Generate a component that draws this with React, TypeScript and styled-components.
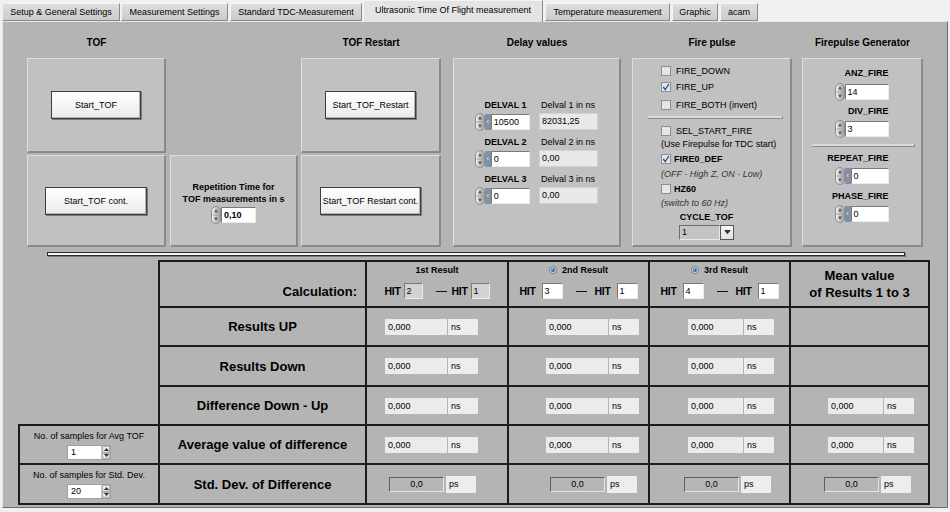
import React from 'react';
import styled, { createGlobalStyle } from 'styled-components';

const GlobalStyle = createGlobalStyle`
  html, body { margin: 0; padding: 0; background: #f0f0f0; }
  body { font-family: "Liberation Sans", Arial, sans-serif; font-size: 9px; color: #000; }
  * { box-sizing: border-box; }
`;

const Page = styled.div`
  width: 950px;
  height: 512px;
  overflow: hidden;
  background: #f0f0f0;
`;

const TabBar = styled.div`
  display: flex;
  align-items: flex-end;
  height: 21px;
  padding-left: 2px;
  position: relative;
  z-index: 1;
`;

const Tab = styled.div<{ $w: number; $active?: boolean; $ml?: number }>`
  width: ${(p) => p.$w}px;
  margin-left: ${(p) => p.$ml ?? 0}px;
  height: ${(p) => (p.$active ? 22 : 18)}px;
  margin-bottom: ${(p) => (p.$active ? -1 : 0)}px;
  display: flex;
  align-items: center;
  justify-content: center;
  padding-bottom: ${(p) => (p.$active ? 4 : 0)}px;
  background: ${(p) => (p.$active ? '#e4e4e4' : 'linear-gradient(#dedede, #cbcbcb)')};
  border: 1px solid #8a8a8a;
  border-top-color: #f4f4f4;
  border-left-color: #f4f4f4;
  border-bottom: ${(p) => (p.$active ? 'none' : '1px solid #8a8a8a')};
  font-size: 9px;
  white-space: nowrap;
`;

const Panel = styled.div`
  margin-left: 2px;
  width: 946px;
  height: 487px;
  background: #b4b4b4;
  border: 1px solid;
  border-color: #e6e6e6 #6c6c6c #6c6c6c #e6e6e6;
  padding-top: 10px;
  display: flex;
  flex-direction: column;
`;

const TopRow = styled.div`
  display: flex;
  margin-left: 24px;
`;

const Column = styled.div<{ $w: number; $ml?: number }>`
  width: ${(p) => p.$w}px;
  margin-left: ${(p) => p.$ml ?? 0}px;
  display: flex;
  flex-direction: column;
`;

const Heading = styled.div`
  height: 20px;
  margin-bottom: 6px;
  display: flex;
  align-items: center;
  justify-content: center;
  font-weight: bold;
  font-size: 10px;
  white-space: nowrap;
`;

const Spacer = styled.div<{ $h: number }>`
  height: ${(p) => p.$h}px;
`;

const Cell = styled.div<{ $h: number; $mt?: number; $justify?: string; $align?: string; $pt?: number; $pl?: number }>`
  height: ${(p) => p.$h}px;
  margin-top: ${(p) => p.$mt ?? 0}px;
  background: #c1c1c1;
  border-style: solid;
  border-width: 1px 2px 2px 1px;
  border-color: #dedede #8a8a8a #8a8a8a #dedede;
  display: flex;
  flex-direction: column;
  justify-content: ${(p) => p.$justify ?? 'center'};
  align-items: ${(p) => p.$align ?? 'center'};
  padding-top: ${(p) => p.$pt ?? 0}px;
  padding-left: ${(p) => p.$pl ?? 0}px;
`;

const PushButton = styled.button<{ $w: number }>`
  width: ${(p) => p.$w}px;
  height: 28px;
  padding: 0;
  background: linear-gradient(#ffffff, #ebebeb);
  border: 1px solid #3e3e3e;
  box-shadow: inset -1px -1px 0 #b4b4b4, 1px 1px 0 #7a7a7a;
  font-family: "Liberation Sans", Arial, sans-serif;
  font-size: 9px;
  color: #000;
  white-space: nowrap;
`;

const BoldLine = styled.div<{ $mt?: number }>`
  font-weight: bold;
  font-size: 9px;
  line-height: 12px;
  white-space: nowrap;
  margin-top: ${(p) => p.$mt ?? 0}px;
`;

const Control = styled.div<{ $mt?: number }>`
  display: flex;
  align-items: center;
  height: 18px;
  margin-top: ${(p) => p.$mt ?? 0}px;
`;

const SpinSvg = styled.svg`
  display: block;
  flex: none;
`;

const IndexStrip = styled.div`
  width: 6px;
  height: 16px;
  background: #8290a6;
  color: #dfe6f0;
  font-size: 8px;
  line-height: 16px;
  text-align: center;
`;

const InputBox = styled.div<{ $w: number; $bold?: boolean }>`
  width: ${(p) => p.$w}px;
  height: 16px;
  background: #fff;
  border: 1px solid;
  border-color: #7a7a7a #ececec #ececec #7a7a7a;
  font-size: 9px;
  line-height: 14px;
  padding-left: 2px;
  font-weight: ${(p) => (p.$bold ? 'bold' : 'normal')};
  white-space: nowrap;
`;

const ReadBox = styled.div<{ $w: number }>`
  width: ${(p) => p.$w}px;
  height: 17px;
  background: #e8e8e8;
  border: 1px solid #d2d2d2;
  font-size: 9px;
  line-height: 15px;
  padding-left: 2px;
`;

const Spinner = () => (
  <SpinSvg width="10" height="18" viewBox="0 0 10 18">
    <defs>
      <linearGradient id="spg" x1="0" x2="1" y1="0" y2="0">
        <stop offset="0" stopColor="#f6f6f6" />
        <stop offset="1" stopColor="#9a9a9a" />
      </linearGradient>
    </defs>
    <rect x="0.5" y="0.5" width="9" height="17" rx="4.5" fill="url(#spg)" stroke="#8c8c8c" />
    <line x1="1.5" y1="9" x2="8.5" y2="9" stroke="#a0a0a0" />
    <path d="M5 3 L7 6.5 L3 6.5 Z" fill="#5c5c5c" />
    <path d="M5 15 L7 11.5 L3 11.5 Z" fill="#5c5c5c" />
  </SpinSvg>
);

const NumControl = ({ value, w, strip, bold, mt }: { value: string; w: number; strip?: boolean; bold?: boolean; mt?: number }) => (
  <Control $mt={mt}>
    <Spinner />
    {strip && <IndexStrip>‹</IndexStrip>}
    <InputBox $w={w} $bold={bold}>{value}</InputBox>
  </Control>
);

/* Delay values */
const DelayBlock = styled.div<{ $mt?: number }>`
  display: grid;
  grid-template-columns: 55px 59px;
  column-gap: 9px;
  row-gap: 2px;
  margin-top: ${(p) => p.$mt ?? 0}px;
`;

const DelayLabel = styled.div`
  font-weight: bold;
  font-size: 9px;
  line-height: 12px;
  text-align: center;
  padding-left: 6px;
  white-space: nowrap;
`;

const SmallLabel = styled.div`
  font-size: 9px;
  line-height: 12px;
  padding-left: 2px;
  white-space: nowrap;
`;

/* Fire pulse */
const CheckRow = styled.div<{ $mt?: number }>`
  display: flex;
  align-items: center;
  height: 14px;
  margin-top: ${(p) => p.$mt ?? 0}px;
  white-space: nowrap;
`;

const CheckText = styled.span<{ $bold?: boolean }>`
  margin-left: ${(p) => (p.$bold ? 3 : 5)}px;
  font-size: 9px;
  font-weight: ${(p) => (p.$bold ? 'bold' : 'normal')};
`;

const NoteLine = styled.div<{ $mt?: number; $italic?: boolean }>`
  font-size: 9px;
  line-height: 12px;
  font-style: ${(p) => (p.$italic ? 'italic' : 'normal')};
  color: ${(p) => (p.$italic ? '#333' : '#000')};
  margin-top: ${(p) => p.$mt ?? 0}px;
  white-space: nowrap;
`;

const SubSep = styled.div<{ $w: number; $ml: number; $mt: number; $mb: number }>`
  width: ${(p) => p.$w}px;
  height: 3px;
  margin: ${(p) => p.$mt}px 0 ${(p) => p.$mb}px ${(p) => p.$ml}px;
  background: #dadada;
  border-bottom: 1px solid #8a8a8a;
  border-right: 1px solid #8a8a8a;
  align-self: flex-start;
`;

const Check = ({ checked }: { checked?: boolean }) => (
  <svg width="10" height="10" viewBox="0 0 10 10" style={{ display: 'block', flex: 'none' }}>
    <rect x="0.5" y="0.5" width="9" height="9" fill="#e6e6e6" stroke="#8e8e8e" />
    {checked && <path d="M2.3 5 L4.2 7.6 L7.9 2.2" fill="none" stroke="#2050a8" strokeWidth="1.3" />}
  </svg>
);

const CycleBlock = styled.div`
  width: 55px;
  margin-left: 18px;
  margin-top: 2px;
  display: flex;
  flex-direction: column;
  align-items: center;
`;

const Dropdown = styled.div`
  display: flex;
  margin-top: 2px;
  height: 15px;
`;

const DropField = styled.div`
  width: 41px;
  height: 15px;
  background: #c4c4c4;
  border: 1px solid;
  border-color: #6e6e6e #e8e8e8 #e8e8e8 #6e6e6e;
  font-size: 9px;
  line-height: 13px;
  padding-left: 2px;
`;

const DropArrow = styled.div`
  width: 14px;
  height: 15px;
  background: linear-gradient(#fafafa, #e2e2e2);
  border: 1px solid #555;
  display: flex;
  align-items: center;
  justify-content: center;
`;

/* Firepulse generator */
const GenBlock = styled.div`
  width: 53px;
  display: flex;
  flex-direction: column;
  align-items: flex-end;
`;

const GenLabel = styled.div<{ $mt?: number }>`
  font-weight: bold;
  font-size: 9px;
  line-height: 12px;
  white-space: nowrap;
  margin-top: ${(p) => p.$mt ?? 0}px;
`;

/* Separator */
const BigSep = styled.div`
  margin: 5px 0 4px 44px;
  width: 858px;
  height: 4px;
  background: #f6f6f6;
  border: 1px solid #2a2a2a;
  box-shadow: 1px 1px 0 #7a7a7a;
`;

/* Table */
const Bottom = styled.div`
  display: flex;
  align-items: flex-end;
  margin-left: 15px;
`;

const SideBox = styled.div`
  width: 140px;
  display: grid;
  grid-template-rows: 37px 38px;
  row-gap: 2px;
  padding: 2px 0 2px 2px;
  background: #1c1c1c;
`;

const SideCell = styled.div`
  background: #b4b4b4;
  display: flex;
  flex-direction: column;
  align-items: center;
  padding-top: 4px;
`;

const SampleInput = styled.div`
  width: 44px;
  height: 15px;
  margin-top: 3px;
  background: #fff;
  border: 1px solid #a0a0a0;
  display: flex;
  font-size: 9px;
  line-height: 13px;
`;

const SampleValue = styled.div`
  flex: 1;
  padding-left: 3px;
`;

const SampleSpin = styled.div`
  width: 9px;
  display: flex;
  flex-direction: column;
  border-left: 1px solid #c8c8c8;
`;

const SpinHalf = styled.div`
  flex: 1;
  background: linear-gradient(#f4f4f4, #d8d8d8);
  border: 1px solid #b0b0b0;
  display: flex;
  align-items: center;
  justify-content: center;
`;

const Table = styled.div`
  display: grid;
  grid-template-columns: 205px 140px 139px 139px 137px;
  grid-template-rows: 44px 37px 38px 37px 37px 38px;
  gap: 2px;
  padding: 2px;
  background: #1c1c1c;
`;

const TCell = styled.div<{ $pl?: number }>`
  background: #b4b4b4;
  display: flex;
  align-items: center;
  padding-left: ${(p) => p.$pl ?? 0}px;
`;

const RowLabel = styled(TCell)`
  justify-content: center;
  font-weight: bold;
  font-size: 13px;
  white-space: nowrap;
`;

const CalcLabel = styled(TCell)`
  justify-content: flex-end;
  align-items: flex-end;
  padding: 0 8px 7px 0;
  font-weight: bold;
  font-size: 13px;
`;

const HeadCell = styled(TCell)`
  flex-direction: column;
  align-items: center;
  padding-top: 2px;
`;

const MeanCell = styled(TCell)`
  flex-direction: column;
  justify-content: center;
  font-weight: bold;
  font-size: 13px;
  line-height: 17px;
  text-align: center;
`;

const ResultTitle = styled.div`
  display: flex;
  align-items: center;
  height: 12px;
  font-weight: bold;
  font-size: 9px;
  white-space: nowrap;
`;

const HitRow = styled.div`
  display: flex;
  align-items: center;
  height: 16px;
  margin-top: 7px;
`;

const HitLabel = styled.span<{ $ml?: number }>`
  font-weight: bold;
  font-size: 10.5px;
  letter-spacing: -0.3px;
  margin-left: ${(p) => p.$ml ?? 0}px;
`;

const HitBox = styled.div<{ $w: number; $ml: number; $disabled?: boolean }>`
  width: ${(p) => p.$w}px;
  height: 16px;
  margin-left: ${(p) => p.$ml}px;
  background: ${(p) => (p.$disabled ? '#d2d2d2' : '#fff')};
  border: 1px solid;
  border-color: #7a7a7a #ececec #ececec #7a7a7a;
  font-size: 9px;
  line-height: 14px;
  padding-left: 2px;
`;

const Dash = styled.span<{ $ml: number }>`
  width: 11px;
  height: 1px;
  margin-left: ${(p) => p.$ml}px;
  background: #111;
`;

const ValBox = styled.div<{ $w: number }>`
  width: ${(p) => p.$w}px;
  height: 16px;
  background: #ebebeb;
  font-size: 9px;
  line-height: 16px;
  padding-left: 3px;
`;

const UnitBox = styled.div`
  width: 30px;
  height: 16px;
  margin-left: 1px;
  background: #ededed;
  font-size: 9px;
  line-height: 16px;
  padding-left: 3px;
`;

const StdBox = styled.div`
  width: 55px;
  height: 15px;
  background: #b6b6b6;
  border: 1px solid;
  border-color: #5e5e5e #e4e4e4 #e4e4e4 #5e5e5e;
  font-size: 9px;
  line-height: 13px;
  text-align: center;
`;

const StdUnit = styled.div`
  width: 30px;
  height: 17px;
  margin-left: 2px;
  background: #ededed;
  font-size: 9px;
  line-height: 17px;
  padding-left: 3px;
`;

const Radio = () => (
  <svg width="8" height="8" viewBox="0 0 8 8" style={{ display: 'block', marginRight: 5 }}>
    <circle cx="4" cy="4" r="3.5" fill="#dcdcdc" stroke="#7a7a7a" />
    <circle cx="4" cy="4" r="2" fill="#2d6cae" />
    <circle cx="3.4" cy="3.3" r="0.7" fill="#a8d0f0" />
  </svg>
);

const Triangle = ({ up, size = 5 }: { up?: boolean; size?: number }) => (
  <svg width={size} height={size * 0.6} viewBox="0 0 10 6" style={{ display: 'block' }}>
    <path d={up ? 'M5 0 L10 6 L0 6 Z' : 'M0 0 L10 0 L5 6 Z'} fill="#333" />
  </svg>
);

const Value = ({ w, pl }: { w: number; pl: number }) => (
  <TCell $pl={pl}>
    <ValBox $w={w}>0,000</ValBox>
    <UnitBox>ns</UnitBox>
  </TCell>
);

const Std = ({ pl }: { pl: number }) => (
  <TCell $pl={pl}>
    <StdBox>0,0</StdBox>
    <StdUnit>ps</StdUnit>
  </TCell>
);

const Hit = ({ a, b, w, g, disabled }: { a: string; b: string; w: number; g: number; disabled?: boolean }) => (
  <HitRow>
    <HitLabel>HIT</HitLabel>
    <HitBox $w={w} $ml={g} $disabled={disabled}>{a}</HitBox>
    <Dash $ml={13} />
    <HitLabel $ml={g + 2}>HIT</HitLabel>
    <HitBox $w={w} $ml={g} $disabled={disabled}>{b}</HitBox>
  </HitRow>
);

const tabs = [
  { t: 'Setup & General Settings', w: 118, ml: 0 },
  { t: 'Measurement Settings', w: 107, ml: 1 },
  { t: 'Standard TDC-Measurement', w: 132, ml: 2 },
  { t: 'Ultrasonic Time Of Flight measurement', w: 180, ml: 1, active: true },
  { t: 'Temperature measurement', w: 125, ml: 2 },
  { t: 'Graphic', w: 46, ml: 2 },
  { t: 'acam', w: 38, ml: 2 },
];

const delays = [
  { n: 'DELVAL 1', v: '10500', l: 'Delval 1 in ns', r: '82031,25' },
  { n: 'DELVAL 2', v: '0', l: 'Delval 2 in ns', r: '0,00' },
  { n: 'DELVAL 3', v: '0', l: 'Delval 3 in ns', r: '0,00' },
];

export default function App() {
  return (
    <Page>
      <GlobalStyle />
      <TabBar>
        {tabs.map((t) => (
          <Tab key={t.t} $w={t.w} $ml={t.ml} $active={t.active}>
            {t.t}
          </Tab>
        ))}
      </TabBar>
      <Panel>
        <TopRow>
          <Column $w={139}>
            <Heading>TOF</Heading>
            <Cell $h={95}>
              <PushButton $w={90}>Start_TOF</PushButton>
            </Cell>
            <Cell $h={92} $mt={2}>
              <PushButton $w={102}>Start_TOF cont.</PushButton>
            </Cell>
          </Column>
          <Column $w={128} $ml={4}>
            <Heading />
            <Spacer $h={95} />
            <Cell $h={92} $mt={2} $pt={4}>
              <BoldLine>Repetition Time for</BoldLine>
              <BoldLine>TOF measurements in s</BoldLine>
              <NumControl value="0,10" w={35} bold mt={1} />
            </Cell>
          </Column>
          <Column $w={140} $ml={3}>
            <Heading>TOF Restart</Heading>
            <Cell $h={95}>
              <PushButton $w={91}>Start_TOF_Restart</PushButton>
            </Cell>
            <Cell $h={92} $mt={2}>
              <PushButton $w={101}>Start_TOF Restart cont.</PushButton>
            </Cell>
          </Column>
          <Column $w={168} $ml={12}>
            <Heading>Delay values</Heading>
            <Cell $h={189}>
              {delays.map((d, i) => (
                <DelayBlock key={d.n} $mt={i === 0 ? 0 : 5}>
                  <DelayLabel>{d.n}</DelayLabel>
                  <SmallLabel>{d.l}</SmallLabel>
                  <NumControl value={d.v} w={40} strip />
                  <ReadBox $w={59}>{d.r}</ReadBox>
                </DelayBlock>
              ))}
            </Cell>
          </Column>
          <Column $w={160} $ml={11}>
            <Heading>Fire pulse</Heading>
            <Cell $h={189} $justify="flex-start" $align="flex-start" $pt={5} $pl={28}>
              <CheckRow>
                <Check />
                <CheckText>FIRE_DOWN</CheckText>
              </CheckRow>
              <CheckRow $mt={2}>
                <Check checked />
                <CheckText>FIRE_UP</CheckText>
              </CheckRow>
              <CheckRow $mt={4}>
                <Check />
                <CheckText>FIRE_BOTH (invert)</CheckText>
              </CheckRow>
              <SubSep $w={135} $ml={-13} $mt={4} $mb={0} />
              <CheckRow $mt={5}>
                <Check />
                <CheckText>SEL_START_FIRE</CheckText>
              </CheckRow>
              <NoteLine>(Use Firepulse for TDC start)</NoteLine>
              <CheckRow $mt={2}>
                <Check checked />
                <CheckText $bold>FIRE0_DEF</CheckText>
              </CheckRow>
              <NoteLine $mt={2} $italic>(OFF - High Z, ON - Low)</NoteLine>
              <CheckRow $mt={2}>
                <Check />
                <CheckText $bold>HZ60</CheckText>
              </CheckRow>
              <NoteLine $mt={1} $italic>(switch to 60 Hz)</NoteLine>
              <CycleBlock>
                <BoldLine>CYCLE_TOF</BoldLine>
                <Dropdown>
                  <DropField>1</DropField>
                  <DropArrow>
                    <Triangle size={7} />
                  </DropArrow>
                </Dropdown>
              </CycleBlock>
            </Cell>
          </Column>
          <Column $w={121} $ml={10}>
            <Heading>Firepulse Generator</Heading>
            <Cell $h={189} $justify="flex-start" $pt={8}>
              <GenBlock>
                <GenLabel>ANZ_FIRE</GenLabel>
                <NumControl value="14" w={44} mt={4} />
                <GenLabel $mt={4}>DIV_FIRE</GenLabel>
                <NumControl value="3" w={44} mt={3} />
                <SubSep $w={103} $ml={-24} $mt={6} $mb={0} />
                <GenLabel $mt={5}>REPEAT_FIRE</GenLabel>
                <NumControl value="0" w={38} strip mt={3} />
                <GenLabel $mt={5}>PHASE_FIRE</GenLabel>
                <NumControl value="0" w={38} strip mt={3} />
              </GenBlock>
            </Cell>
          </Column>
        </TopRow>

        <BigSep />

        <Bottom>
          <SideBox>
            <SideCell>
              <NoteLine>No. of samples for Avg TOF</NoteLine>
              <SampleInput>
                <SampleValue>1</SampleValue>
                <SampleSpin>
                  <SpinHalf><Triangle up size={5} /></SpinHalf>
                  <SpinHalf><Triangle size={5} /></SpinHalf>
                </SampleSpin>
              </SampleInput>
            </SideCell>
            <SideCell>
              <NoteLine>No. of samples for Std. Dev.</NoteLine>
              <SampleInput>
                <SampleValue>20</SampleValue>
                <SampleSpin>
                  <SpinHalf><Triangle up size={5} /></SpinHalf>
                  <SpinHalf><Triangle size={5} /></SpinHalf>
                </SampleSpin>
              </SampleInput>
            </SideCell>
          </SideBox>
          <Table>
            <CalcLabel>Calculation:</CalcLabel>
            <HeadCell>
              <ResultTitle>1st Result</ResultTitle>
              <Hit a="2" b="1" w={19} g={3} disabled />
            </HeadCell>
            <HeadCell>
              <ResultTitle>
                <Radio />
                2nd Result
              </ResultTitle>
              <Hit a="3" b="1" w={21} g={6} />
            </HeadCell>
            <HeadCell>
              <ResultTitle>
                <Radio />
                3rd Result
              </ResultTitle>
              <Hit a="4" b="1" w={21} g={6} />
            </HeadCell>
            <MeanCell>
              <div>Mean value</div>
              <div>of Results 1 to 3</div>
            </MeanCell>

            <RowLabel>Results UP</RowLabel>
            <Value w={62} pl={18} />
            <Value w={62} pl={37} />
            <Value w={55} pl={38} />
            <TCell />

            <RowLabel>Results Down</RowLabel>
            <Value w={62} pl={18} />
            <Value w={62} pl={37} />
            <Value w={55} pl={38} />
            <TCell />

            <RowLabel>Difference Down - Up</RowLabel>
            <Value w={62} pl={18} />
            <Value w={62} pl={37} />
            <Value w={55} pl={38} />
            <Value w={55} pl={37} />

            <RowLabel>Average value of difference</RowLabel>
            <Value w={62} pl={18} />
            <Value w={62} pl={37} />
            <Value w={55} pl={38} />
            <Value w={55} pl={37} />

            <RowLabel>Std. Dev. of Difference</RowLabel>
            <Std pl={22} />
            <Std pl={41} />
            <Std pl={34} />
            <Std pl={33} />
          </Table>
        </Bottom>
      </Panel>
    </Page>
  );
}
